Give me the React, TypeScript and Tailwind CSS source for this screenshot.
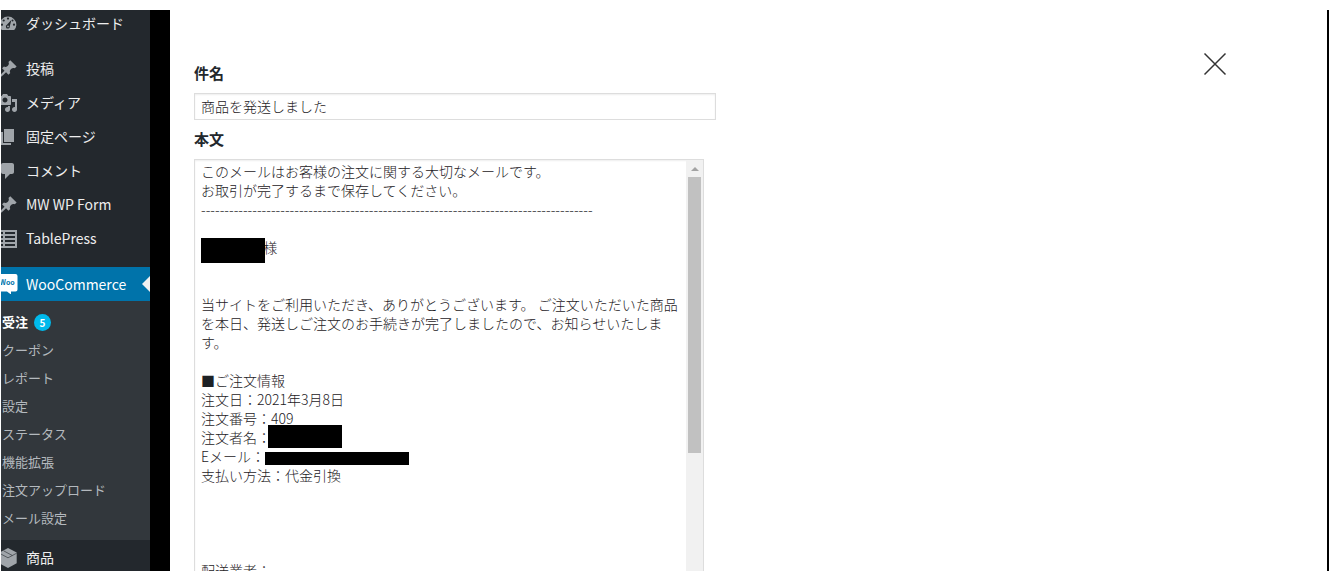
import { useState } from "react";
import type { ReactNode } from "react";
import clsx from "clsx";

const PIN_PATH =
  "M10.44 3.02l1.82-1.82 6.36 6.35-1.83 1.82c-1.05-.68-2.48-.57-3.41.36l-.75.75c-.92.93-1.04 2.35-.35 3.41l-1.83 1.82-2.41-2.41-2.8 2.79c-.42.42-3.38 2.71-3.8 2.29s1.86-3.39 2.28-3.81l2.79-2.79L4.1 9.36l1.83-1.82c1.05.69 2.48.57 3.4-.36l.75-.75c.93-.92 1.05-2.35.36-3.41z";

const MEDIA_PATH =
  "M13 11V4c0-.55-.45-1-1-1h-1.67L9 1H5L3.67 3H2c-.55 0-1 .45-1 1v7c0 .55.45 1 1 1h10c.55 0 1-.45 1-1zM7 4.5c1.38 0 2.5 1.12 2.5 2.5S8.38 9.5 7 9.5 4.5 8.38 4.5 7 5.62 4.5 7 4.5zM14 6h5v10.5c0 1.38-1.12 2.5-2.5 2.5S14 17.88 14 16.5s1.12-2.5 2.5-2.5c.17 0 .34.02.5.05V9h-3V6zm-4 8.05V13h2v3.5c0 1.38-1.12 2.5-2.5 2.5S7 17.88 7 16.5 8.12 14 9.5 14c.17 0 .34.02.5.05z";

const subItems = [
  { label: "受注", count: 5 },
  { label: "クーポン" },
  { label: "レポート" },
  { label: "設定" },
  { label: "ステータス" },
  { label: "機能拡張" },
  { label: "注文アップロード" },
  { label: "メール設定" },
];

const mailBody = [
  "このメールはお客様の注文に関する大切なメールです。",
  "お取引が完了するまで保存してください。",
  "-".repeat(84),
  "",
  "\u3000\u3000\u3000\u3000\u00a0\u00a0様",
  "",
  "",
  "当サイトをご利用いただき、ありがとうございます。 ご注文いただいた商品を本日、発送しご注文のお手続きが完了しましたので、お知らせいたします。",
  "",
  "■ご注文情報",
  "注文日：2021年3月8日",
  "注文番号：409",
  "注文者名：",
  "Eメール：",
  "支払い方法：代金引換",
  "",
  "",
  "",
  "",
  "配送業者：",
].join("\n");

function Icon({ children }: { children: ReactNode }) {
  return (
    <svg viewBox="0 0 20 20" className="size-5 shrink-0 fill-[#a0a5aa]" aria-hidden="true">
      {children}
    </svg>
  );
}

function DashboardIcon() {
  return (
    <Icon>
      <path d="M3.8 17h12.4A8.4 8.4 0 0 0 18.4 12 8.4 8.4 0 0 0 1.6 12c0 1.900.8 3.700 2.200 5z" />
      <g className="fill-[#23282d]">
        <circle cx="10" cy="5.600" r="1.100" />
        <circle cx="5.700" cy="7.500" r="1.100" />
        <circle cx="4" cy="11.700" r="1.100" />
        <circle cx="16" cy="11.700" r="1.100" />
        <circle cx="14.600" cy="7.500" r=".9" />
        <path d="M13.500 6.800l-1.700 6.200a2 2 0 1 1-2.900-1.200z" />
      </g>
      <circle cx="10" cy="13.400" r=".9" />
    </Icon>
  );
}

function TableIcon() {
  return (
    <Icon>
      <path d="M1 1h18v18H1z" />
      <path
        className="fill-[#23282d]"
        d="M3 3h2v2H3zm4 0h10v2H7zM3 7h2v2H3zm4 0h10v2H7zm-4 4h2v2H3zm4 0h10v2H7zm-4 4h2v2H3zm4 0h10v2H7z"
      />
    </Icon>
  );
}

function BoxIcon() {
  return (
    <Icon>
      <path d="M10 0l8.700 4.600v10.600L10 20l-8.700-4.800V4.600z" />
      <path
        d="M1.300 5.200l8.700 4.600 8.700-4.600M5.600 2.800l8.700 4.700"
        className="fill-none stroke-[#23282d]"
        strokeWidth=".6"
      />
    </Icon>
  );
}

function WooIcon() {
  return (
    <Icon>
      <path className="fill-white" d="M2 0h15.500a2 2 0 0 1 2 2v13.500a2 2 0 0 1-2 2h-4.500v3l-4-3H2z" />
      <text x="1.500" y="11" className="fill-[#0073aa] text-[7px] font-bold">
        Woo
      </text>
    </Icon>
  );
}

function MenuItem({ icon, label, active }: { icon: ReactNode; label: string; active?: boolean }) {
  return (
    <a
      href="#"
      className={clsx(
        "relative flex h-[34px] items-center gap-2 text-sm",
        active ? "bg-[#0073aa] text-white" : "text-[#eee]",
      )}
    >
      <span className={clsx("-ml-[3px]", !active && "pt-[2px]")}>{icon}</span>
      {label}
      {active && (
        <span className="absolute right-0 border-y-8 border-r-8 border-y-transparent border-r-[#f1f1f1]" />
      )}
    </a>
  );
}

function Sidebar() {
  return (
    <nav className="w-[149px] shrink-0 overflow-hidden bg-[#23282d]">
      <a href="#" className="mb-[15px] flex h-[26px] items-center gap-2 text-sm text-[#eee]">
        <span className="-ml-[3px]">
          <DashboardIcon />
        </span>
        ダッシュボード
      </a>
      <MenuItem icon={<Icon><path d={PIN_PATH} /></Icon>} label="投稿" />
      <MenuItem icon={<Icon><path d={MEDIA_PATH} /></Icon>} label="メディア" />
      <MenuItem icon={<Icon><path d="M6 15V2h10v13H6zm-1 1h8v2H3V5h2v11z" /></Icon>} label="固定ページ" />
      <MenuItem
        icon={
          <Icon>
            <path d="M5 2h9c1.100 0 2 .9 2 2v7c0 1.100-.9 2-2 2h-2l-5 5v-5H5c-1.100 0-2-.9-2-2V4c0-1.100.9-2 2-2z" />
          </Icon>
        }
        label="コメント"
      />
      <MenuItem icon={<Icon><path d={PIN_PATH} /></Icon>} label="MW WP Form" />
      <MenuItem icon={<TableIcon />} label="TablePress" />
      <div className="mt-3">
        <MenuItem icon={<WooIcon />} label="WooCommerce" active />
      </div>
      <ul className="bg-[#32373c] pt-[7px] pb-2">
        {subItems.map((item) => (
          <li key={item.label}>
            <a
              href="#"
              className={clsx(
                "flex h-7 items-center gap-[6px] pl-px text-[13px]",
                item.count ? "font-bold text-white" : "text-[#b4b9be]",
              )}
            >
              {item.label}
              {item.count && (
                <span className="flex size-[17px] items-center justify-center rounded-full bg-[#00b9eb] text-[10px] text-white">
                  {item.count}
                </span>
              )}
            </a>
          </li>
        ))}
      </ul>
      <MenuItem icon={<BoxIcon />} label="商品" />
    </nav>
  );
}

function MailForm() {
  const [subject, setSubject] = useState("商品を発送しました");
  const [body, setBody] = useState(mailBody);

  return (
    <form className="flex w-[522px] flex-col gap-[10px] pt-[54px] text-sm text-[#1d2125]">
      <label htmlFor="subject" className="pb-[2px] text-[15px] leading-[17px] font-bold text-[#23282d]">
        件名
      </label>
      <input
        id="subject"
        type="text"
        value={subject}
        onChange={(e) => setSubject(e.target.value)}
        className="h-[27px] border border-[#ddd] px-[6px] pb-[2px] font-light shadow-[inset_0_1px_2px_rgba(0,0,0,0.07)] outline-none"
      />
      <label htmlFor="body" className="pb-[2px] text-[15px] leading-[17px] font-bold text-[#23282d]">
        本文
      </label>
      <div className="relative flex w-[510px] border border-[#ddd] shadow-[inset_0_1px_2px_rgba(0,0,0,0.07)]">
        <textarea
          id="body"
          rows={34}
          value={body}
          onChange={(e) => setBody(e.target.value)}
          className="min-w-0 flex-1 resize-none overflow-hidden pt-[2px] pr-1 pl-[6px] leading-[19px] font-light outline-none"
        />
        <div className="flex w-[17px] flex-col items-center bg-[#f1f1f1]">
          <div className="flex h-[17px] items-center">
            <span className="border-x-4 border-b-4 border-x-transparent border-b-[#a3a3a3]" />
          </div>
          <div className="h-[276px] w-[13px] bg-[#c1c1c1]" />
        </div>
        {/* masked customer data */}
        <span className="absolute top-[78px] left-[6px] h-[25px] w-16 bg-black" />
        <span className="absolute top-[265px] left-[73px] h-[23px] w-[74px] bg-black" />
        <span className="absolute top-[292px] left-[70px] h-[13px] w-36 bg-black" />
      </div>
    </form>
  );
}

export default function App() {
  return (
    <div className="flex h-screen overflow-hidden bg-white pt-[10px] pl-px font-['Noto_Sans_CJK_JP',sans-serif]">
      <Sidebar />
      <div className="w-5 shrink-0 bg-black" />
      <main className="flex flex-1 items-start justify-between border-r-2 border-black pr-[100px] pl-6">
        <MailForm />
        <button type="button" aria-label="閉じる" className="mt-[42px]">
          <svg viewBox="0 0 24 24" className="size-6 stroke-[#333]" strokeWidth="1.500" aria-hidden="true">
            <path d="M1.500 1.500l21 21M22.500 1.500l-21 21" />
          </svg>
        </button>
      </main>
    </div>
  );
}
